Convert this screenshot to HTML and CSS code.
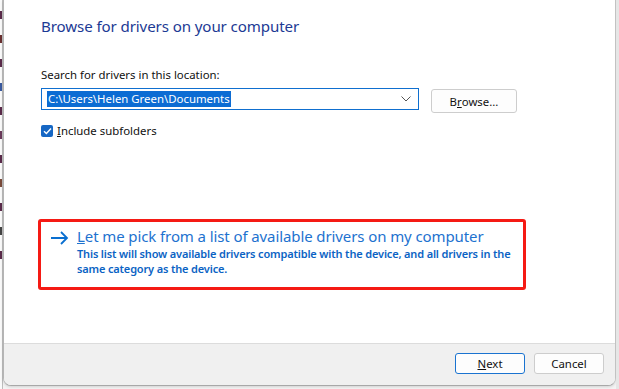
FILE: index.html
```html
<!DOCTYPE html>
<html>
<head>
<meta charset="utf-8">
<link rel="stylesheet" href="styles.css">
</head>
<body>
<div class="desk">
  <div class="behind">
    <span class="frag f1"></span>
    <span class="frag f2"></span>
    <span class="frag f3"></span>
    <span class="frag f4"></span>
    <span class="frag f5"></span>
    <span class="frag f6"></span>
    <span class="frag f7"></span>
    <span class="frag f8"></span>
    <span class="frag f9"></span>
    <span class="frag f10"></span>
    <span class="frag f11"></span>
  </div>
  <div class="dialog">
    <div class="content">
      <h1 class="title">Browse for drivers on your computer</h1>
      <div class="label">Search for drivers in this location:</div>
      <div class="row">
        <div class="combo">
          <span class="sel">C:\Users\Helen Green\Documents</span>
          <svg class="chev" width="10" height="6" viewBox="0 0 10 6"><path d="M0.5 0.5 L5 5 L9.5 0.5" fill="none" stroke="#555" stroke-width="1"/></svg>
        </div>
        <div class="btn browse">B<u>r</u>owse...</div>
      </div>
      <div class="check">
        <span class="box"><svg width="9" height="8" viewBox="0 0 9 8"><path d="M1 4.2 L3.4 6.5 L8 1.5" fill="none" stroke="#fff" stroke-width="1.4"/></svg></span>
        <span><u>I</u>nclude subfolders</span>
      </div>
      <div class="pick">
        <svg class="arrow" width="19" height="14" viewBox="0 0 19 14"><path d="M1 7 H17 M11 1 L17 7 L11 13" fill="none" stroke="#0a6fd0" stroke-width="1.8"/></svg>
        <div class="pick-text">
          <div class="pick-title"><u>L</u>et me pick from a list of available drivers on my computer</div>
          <div class="pick-desc">This list will show available drivers compatible with the device, and all drivers in the same category as the device.</div>
        </div>
      </div>
    </div>
    <div class="footer">
      <div class="btn next"><u>N</u>ext</div>
      <div class="btn cancel">Cancel</div>
    </div>
  </div>
  <div class="right"></div>
</div>
</body>
</html>
```
FILE: styles.css
```css
* { box-sizing: border-box; }
html, body { margin: 0; padding: 0; }
body {
  width: 619px;
  height: 389px;
  overflow: hidden;
  background: #f4f4f4;
  font-family: "Noto Sans", "Open Sans", sans-serif;
}
.desk {
  display: flex;
  height: 389px;
}
.behind {
  width: 3px;
  height: 389px;
  background: #fafafa;
  border-right: 1px solid #bdbdbd;
  display: flex;
  flex-direction: column;
  padding-top: 11px;
  gap: 16px;
  flex-shrink: 0;
}
.frag {
  display: block;
  width: 2px;
  height: 8px;
  background: #5a2a4a;
}
.f2 { background: #6a3030; }
.f4 { background: #3a5aa0; }
.f6 { background: #6a3a5a; }
.f8 { background: #7a4a3a; }
.f10 { background: #444; }
.dialog {
  width: 613px;
  height: 386px;
  background: #fff;
  border-left: 1px solid #b5b5b5;
  border-right: 1px solid #c2c2c2;
  border-bottom: 1px solid #a8a8a8;
  border-bottom-left-radius: 8px;
  border-bottom-right-radius: 8px;
  display: flex;
  flex-direction: column;
  overflow: hidden;
  flex-shrink: 0;
  box-shadow: 0 1px 3px rgba(0,0,0,0.15);
}
.right {
  flex: 1;
  background: #e6e6e6;
}
.content {
  flex: 1;
  padding: 16px 0 0 37px;
}
.title {
  margin: 0;
  font-weight: normal;
  font-size: 15.1px;
  color: #1c3a94;
  line-height: 20px;
  letter-spacing: -0.1px;
}
.label {
  margin-top: 31px;
  font-size: 11.4px;
  line-height: 15px;
  color: #111;
}
.row {
  display: flex;
  align-items: flex-start;
  margin-top: 6px;
}
.combo {
  width: 378px;
  height: 22px;
  border: 1px solid #0f6fcf;
  display: flex;
  align-items: center;
  padding-left: 5px;
  padding-right: 7px;
}
.sel {
  background: #0c6cd3;
  color: #fff;
  font-size: 11.4px;
  line-height: 16px;
  padding: 0 1px;
}
.chev { margin-left: auto; }
.btn {
  display: flex;
  align-items: center;
  justify-content: center;
  border: 1px solid #cdcdcd;
  border-radius: 3px;
  font-size: 11.4px;
  color: #111;
  background: #fdfdfd;
}
.browse {
  width: 86px;
  height: 24px;
  margin-left: 12px;
  margin-top: 1px;
}
.check {
  display: flex;
  align-items: center;
  gap: 4px;
  margin-top: 10px;
  font-size: 11.4px;
  color: #111;
}
.box {
  width: 12px;
  height: 12px;
  border-radius: 2px;
  background: #1667c4;
  display: flex;
  align-items: center;
  justify-content: center;
}
.pick {
  margin-top: 81px;
  margin-left: -3px;
  width: 488px;
  height: 71px;
  border: 3px solid #f51a14;
  border-radius: 3px;
  display: flex;
  align-items: flex-start;
  padding: 5px 0 0 9px;
  gap: 8px;
}
.arrow { margin-top: 4px; flex-shrink: 0; }
.pick-title {
  font-size: 15px;
  line-height: 18px;
  color: #1d72cf;
  letter-spacing: -0.1px;
}
.pick-desc {
  margin-top: 1px;
  font-size: 11px;
  line-height: 15px;
  font-weight: 600;
  color: #0b63c4;
  width: 445px;
  letter-spacing: -0.16px;
}
.footer {
  height: 42px;
  background: #f0f0f0;
  border-top: 1px solid #dcdcdc;
  display: flex;
  justify-content: flex-end;
  align-items: flex-start;
  padding: 9px 11px 0 0;
  gap: 9px;
}
.next, .cancel {
  width: 70px;
  height: 21px;
}
.next {
  border: 1px solid #1a73d0;
  background: #fdfdfd;
}
```
